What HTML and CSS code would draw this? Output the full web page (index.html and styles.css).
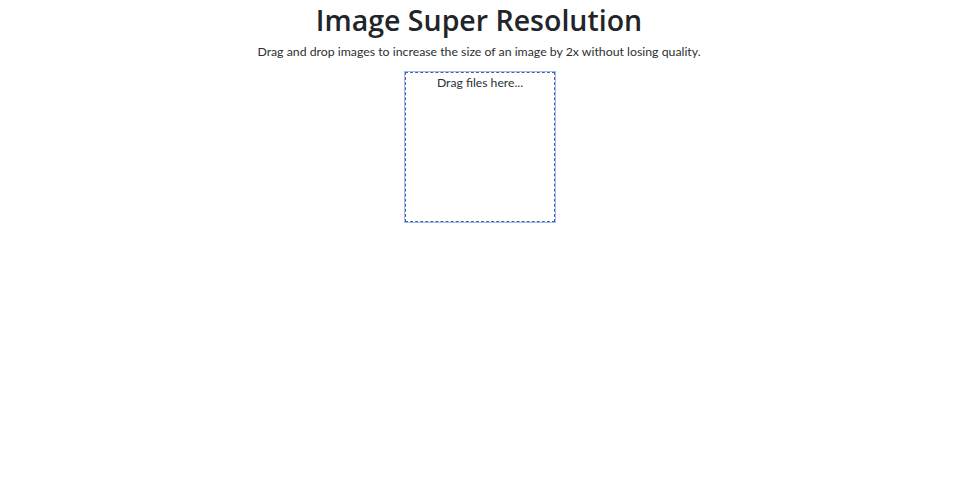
FILE: index.html
```html
<!DOCTYPE html>
<html lang="en">
<head>
<meta charset="utf-8">
<title>Image Super Resolution</title>
<link rel="stylesheet" href="styles.css">
</head>
<body>
<main class="page">
  <h1 class="title">Image Super Resolution</h1>
  <p class="subtitle">Drag and drop images to increase the size of an image by 2x without losing quality.</p>
  <div class="dropzone">Drag files here...</div>
</main>
</body>
</html>
```
FILE: styles.css
```css
html, body {
  margin: 0;
  padding: 0;
  background: #fff;
}
body {
  font-family: "Lato", "Open Sans", sans-serif;
  color: #212529;
}
.page {
  display: flex;
  flex-direction: column;
  align-items: center;
  text-align: center;
}
.title {
  margin: 0;
  font-family: "Open Sans", sans-serif;
  font-size: 28.5px;
  font-weight: 600;
  line-height: 40px;
}
.subtitle {
  margin: 0;
  font-size: 12.3px;
  line-height: 24px;
  color: #2b2f33;
}
.dropzone {
  box-sizing: border-box;
  width: 152px;
  height: 152px;
  margin-top: 7px;
  margin-left: 2px;
  border: 1px solid #9ebcf2;
  outline: 1px dashed #4a5f93;
  outline-offset: -2px;
  padding-top: 2px;
  font-size: 12.2px;
  line-height: 18px;
  color: #2b2f33;
}
```
